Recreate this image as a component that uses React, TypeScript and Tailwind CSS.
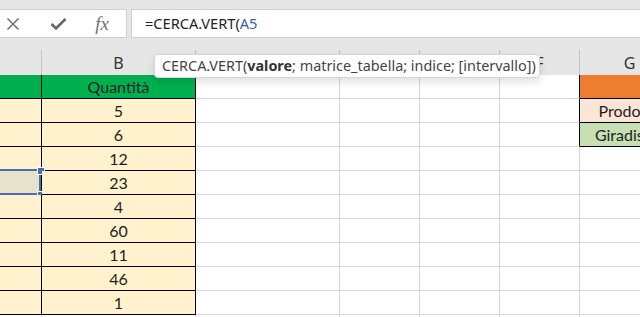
import React from 'react';

/* ================= DATA ================= */

const COLS = [42, 154, 144, 80, 80, 80, 100];
const LETTERS = ['', 'B', 'C', 'D', 'E', 'F', 'G'];

const QTY = [5, 6, 12, 23, 4, 60, 11, 46, 1];

type Cell = {
  text?: string;
  bg: string;
  br: string; // right border class
  bb: string; // bottom border class
};

const R_BLACK = 'border-r-[#000000]';
const R_GRID = 'border-r-[#d4d4d4]';
const B_BLACK = 'border-b-[#000000]';
const B_GRID = 'border-b-[#d4d4d4]';

function buildRows(): Cell[][] {
  const rows: Cell[][] = [];
  for (let r = 0; r < 11; r++) {
    const isHead = r === 0;
    const inTable = r <= 9;
    const tableBg = isHead ? 'bg-[#00b050]' : inTable ? 'bg-[#fff2cc]' : 'bg-white';
    const row: Cell[] = [];
    // A, B
    row.push({ bg: tableBg, br: inTable ? R_BLACK : R_GRID, bb: inTable ? B_BLACK : B_GRID });
    row.push({
      text: isHead ? 'Quantità' : inTable ? String(QTY[r - 1]) : '',
      bg: tableBg,
      br: inTable ? R_BLACK : R_GRID,
      bb: inTable ? B_BLACK : B_GRID,
    });
    // C D E
    row.push({ bg: 'bg-white', br: R_GRID, bb: B_GRID });
    row.push({ bg: 'bg-white', br: R_GRID, bb: B_GRID });
    row.push({ bg: 'bg-white', br: R_GRID, bb: B_GRID });
    // F
    row.push({ bg: 'bg-white', br: r <= 2 ? R_BLACK : R_GRID, bb: B_GRID });
    // G
    const gBg =
      r === 0 ? 'bg-[#ed7d31]' : r === 1 ? 'bg-[#fce4d6]' : r === 2 ? 'bg-[#c6e0b4]' : 'bg-white';
    row.push({
      text: r === 1 ? 'Prodotto' : r === 2 ? 'Giradischi' : '',
      bg: gBg,
      br: r <= 2 ? R_BLACK : R_GRID,
      bb: r <= 2 ? B_BLACK : B_GRID,
    });
    rows.push(row);
  }
  return rows;
}

/* ================= COMPONENT ================= */

const App: React.FC = () => {
  const rows = buildRows();

  return (
    <div className="relative w-[640px] h-[317px] overflow-hidden bg-white font-['Lato',sans-serif]">
      {/* Formula bar */}
      <div className="h-[50px] bg-[#e6e6e6] pt-[9px]">
        <div className="flex h-[29px] gap-[4px]">
          <div className="w-[127px] shrink-0 flex items-center border border-l-0 border-[#cdcdcd] bg-white">
            <span className="w-[25px] flex justify-center">
              <svg width="14" height="14" viewBox="0 0 14 14">
                <path d="M1.5 1.5 L12.5 12.5 M12.5 1.5 L1.5 12.5" stroke="#707070" strokeWidth="1.5" fill="none" />
              </svg>
            </span>
            <span className="w-[66px] flex justify-center">
              <svg width="17" height="14" viewBox="0 0 17 14">
                <path d="M1.5 7 L6 11.5 L15.5 2" stroke="#666666" strokeWidth="2.6" fill="none" />
              </svg>
            </span>
            <span className="w-[22px] text-center font-['Liberation_Serif',serif] italic text-[19px] text-[#707070] leading-none">
              fx
            </span>
          </div>
          <div className="flex-1 flex items-center border border-r-0 border-[#cdcdcd] bg-white pl-[13px] font-['Noto_Sans',sans-serif] text-[14.6px] text-[#222222]">
            =CERCA.VERT(<span className="text-[#3465a8]">A5</span>
          </div>
        </div>
      </div>

      {/* Column headers */}
      <div className="flex h-[25px] bg-[#e6e6e6]">
        {COLS.map((w, i) => (
          <div
            key={i}
            style={{ width: w }}
            className="shrink-0 flex items-center justify-center border-r border-[#c2c2c2] text-[16px] text-[#333333] font-['Noto_Sans',sans-serif]"
          >
            {LETTERS[i]}
          </div>
        ))}
      </div>

      {/* Grid */}
      {rows.map((row, r) => (
        <div key={r} className="flex h-[24px]">
          {row.map((c, i) => (
            <div
              key={i}
              style={{ width: COLS[i] }}
              className={`relative shrink-0 flex items-center justify-center whitespace-nowrap border-r border-b text-[16px] text-[#1e1e1e] ${c.bg} ${c.br} ${c.bb}`}
            >
              {c.text}
              {r === 4 && i === 0 && (
                <>
                  <div className="absolute -left-[3px] -top-[2px] w-[44px] h-[26px] border-2 border-[#4a6fb0] bg-[#e6e2cc]" />
                  <div className="absolute left-[38px] -top-[3px] w-[6px] h-[6px] bg-[#4a6fb0] outline outline-1 outline-white" />
                  <div className="absolute left-[38px] top-[21px] w-[6px] h-[6px] bg-[#4a6fb0] outline outline-1 outline-white" />
                </>
              )}
            </div>
          ))}
        </div>
      ))}

      {/* Function tooltip */}
      <div className="absolute left-[154px] top-[54px] w-[386px] h-[24px] flex items-center pl-[7px] rounded-[4px] border border-[#d6d6d6] bg-white shadow-[0_4px_8px_rgba(0,0,0,0.12)] font-['Noto_Sans',sans-serif] text-[14.4px] text-[#444444] whitespace-nowrap">
        CERCA.VERT(<b className="font-bold text-[#333333]">valore</b>; matrice_tabella; indice; [intervallo])
      </div>
    </div>
  );
};

export default App;
